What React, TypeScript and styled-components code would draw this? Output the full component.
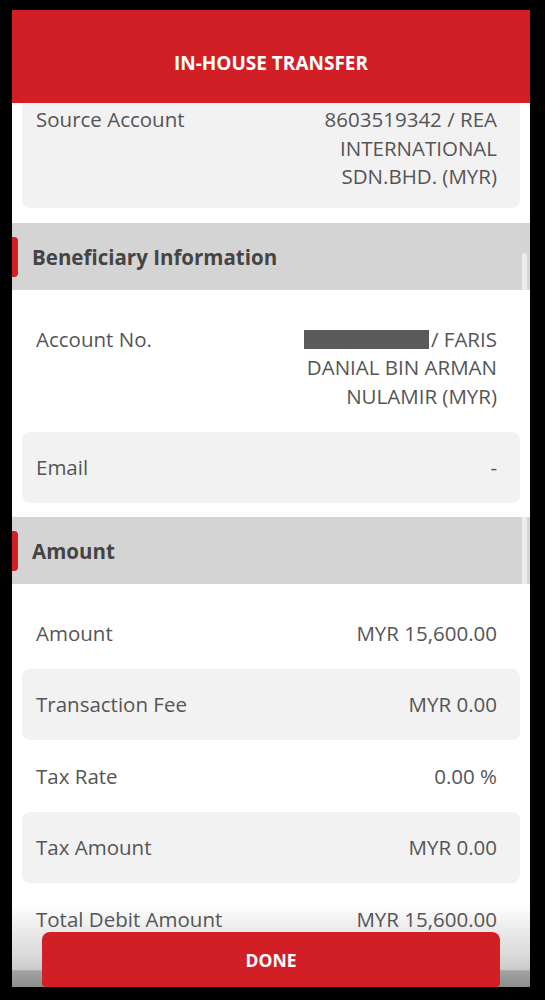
import * as React from 'react';
import styled, { createGlobalStyle } from 'styled-components';

const GlobalStyle = createGlobalStyle`
  html, body {
    margin: 0;
    padding: 0;
    background: #000;
  }
  body {
    font-family: "Open Sans", "Noto Sans", Arial, sans-serif;
  }
`;

const Frame = styled.div`
  width: 545px;
  height: 1000px;
  box-sizing: border-box;
  padding: 10px 15px 13px 12px;
  background: #000;
`;

const Screen = styled.div`
  position: relative;
  height: 100%;
  overflow: hidden;
  background: #fff;
  display: flex;
  flex-direction: column;
`;

const Header = styled.div`
  position: relative;
  z-index: 2;
  flex: 0 0 93px;
  box-sizing: border-box;
  padding-top: 12px;
  background: #d21e25;
  display: flex;
  align-items: center;
  justify-content: center;
  color: #fff;
  font-weight: 700;
  font-size: 19px;
`;

const Body = styled.div`
  position: relative;
  z-index: 1;
  flex: 1;
  display: flex;
  flex-direction: column;
`;

const Section = styled.div`
  display: flex;
  flex-direction: column;
  padding: 13px 0 14px;
`;

const SectionHeader = styled.div`
  position: relative;
  height: 67px;
  background: #d4d4d4;
  display: flex;
  align-items: center;
  padding-left: 20px;
  font-size: 20.5px;
  font-weight: 700;
  color: #444;
`;

const Tab = styled.span`
  position: absolute;
  left: 0;
  top: 14px;
  width: 6px;
  height: 40px;
  background: #d21e25;
  border-radius: 0 4px 4px 0;
`;

const Row = styled.div<{ $shaded?: boolean; $top?: boolean }>`
  margin: 0 10px;
  padding: ${(p) => (p.$top ? '2px 23px 17.5px 14px' : '21.5px 23px 21.5px 14px')};
  display: flex;
  justify-content: space-between;
  gap: 20px;
  background: ${(p) => (p.$shaded ? '#f2f2f2' : 'transparent')};
  border-radius: ${(p) => (p.$top ? '0 0 8px 8px' : '8px')};
  font-size: 20.5px;
  line-height: 28.5px;
  color: #555;
`;

const Label = styled.div`
  white-space: nowrap;
`;

const Value = styled.div`
  text-align: right;
  max-width: 206px;
`;

const Redacted = styled.span`
  display: inline-block;
  width: 125px;
  height: 19px;
  margin-right: 2px;
  vertical-align: -2px;
  background: #5a5a5a;
`;

const Thumb = styled.div`
  position: absolute;
  z-index: 2;
  right: 3px;
  top: 243px;
  width: 5px;
  height: 390px;
  border-radius: 3px;
  background: rgba(255, 255, 255, 0.55);
`;

const Fade = styled.div`
  position: absolute;
  z-index: 0;
  left: 0;
  right: 0;
  bottom: 0;
  height: 84px;
  background: linear-gradient(
    to bottom,
    #fff 0%,
    #ececec 30%,
    #dadada 62%,
    #cbcbcb 79%,
    #a2a2a2 81%,
    #8e8e8e 100%
  );
`;

const DoneButton = styled.button`
  position: absolute;
  z-index: 3;
  left: 30px;
  right: 30px;
  bottom: 0;
  height: 55px;
  border: none;
  border-radius: 8px 8px 4px 4px;
  background: #d21e25;
  color: #fff;
  font-family: inherit;
  font-weight: 700;
  font-size: 17.5px;
  padding: 0;
`;

type Item = { label: string; value: React.ReactNode };

const beneficiary: Item[] = [
  {
    label: 'Account No.',
    value: (
      <>
        <Redacted />/ FARIS DANIAL BIN ARMAN NULAMIR (MYR)
      </>
    ),
  },
  { label: 'Email', value: '-' },
];

const amounts: Item[] = [
  { label: 'Amount', value: 'MYR 15,600.00' },
  { label: 'Transaction Fee', value: 'MYR 0.00' },
  { label: 'Tax Rate', value: '0.00 %' },
  { label: 'Tax Amount', value: 'MYR 0.00' },
  { label: 'Total Debit Amount', value: 'MYR 15,600.00' },
];

const Details = ({ title, items }: { title: string; items: Item[] }) => (
  <>
    <SectionHeader>
      <Tab />
      {title}
    </SectionHeader>
    <Section>
      {items.map((item, i) => (
        <Row key={item.label} $shaded={i % 2 === 1}>
          <Label>{item.label}</Label>
          <Value>{item.value}</Value>
        </Row>
      ))}
    </Section>
  </>
);

const App: React.FC = () => (
  <>
    <GlobalStyle />
    <Frame>
      <Screen>
        <Header>IN-HOUSE TRANSFER</Header>
        <Fade />
        <Body>
          <Row $shaded $top>
            <Label>Source Account</Label>
            <Value>8603519342 / REA INTERNATIONAL SDN.BHD. (MYR)</Value>
          </Row>
          <div style={{ height: 15 }} />
          <Details title="Beneficiary Information" items={beneficiary} />
          <Details title="Amount" items={amounts} />
        </Body>
        <Thumb />
        <DoneButton>DONE</DoneButton>
      </Screen>
    </Frame>
  </>
);

export default App;
